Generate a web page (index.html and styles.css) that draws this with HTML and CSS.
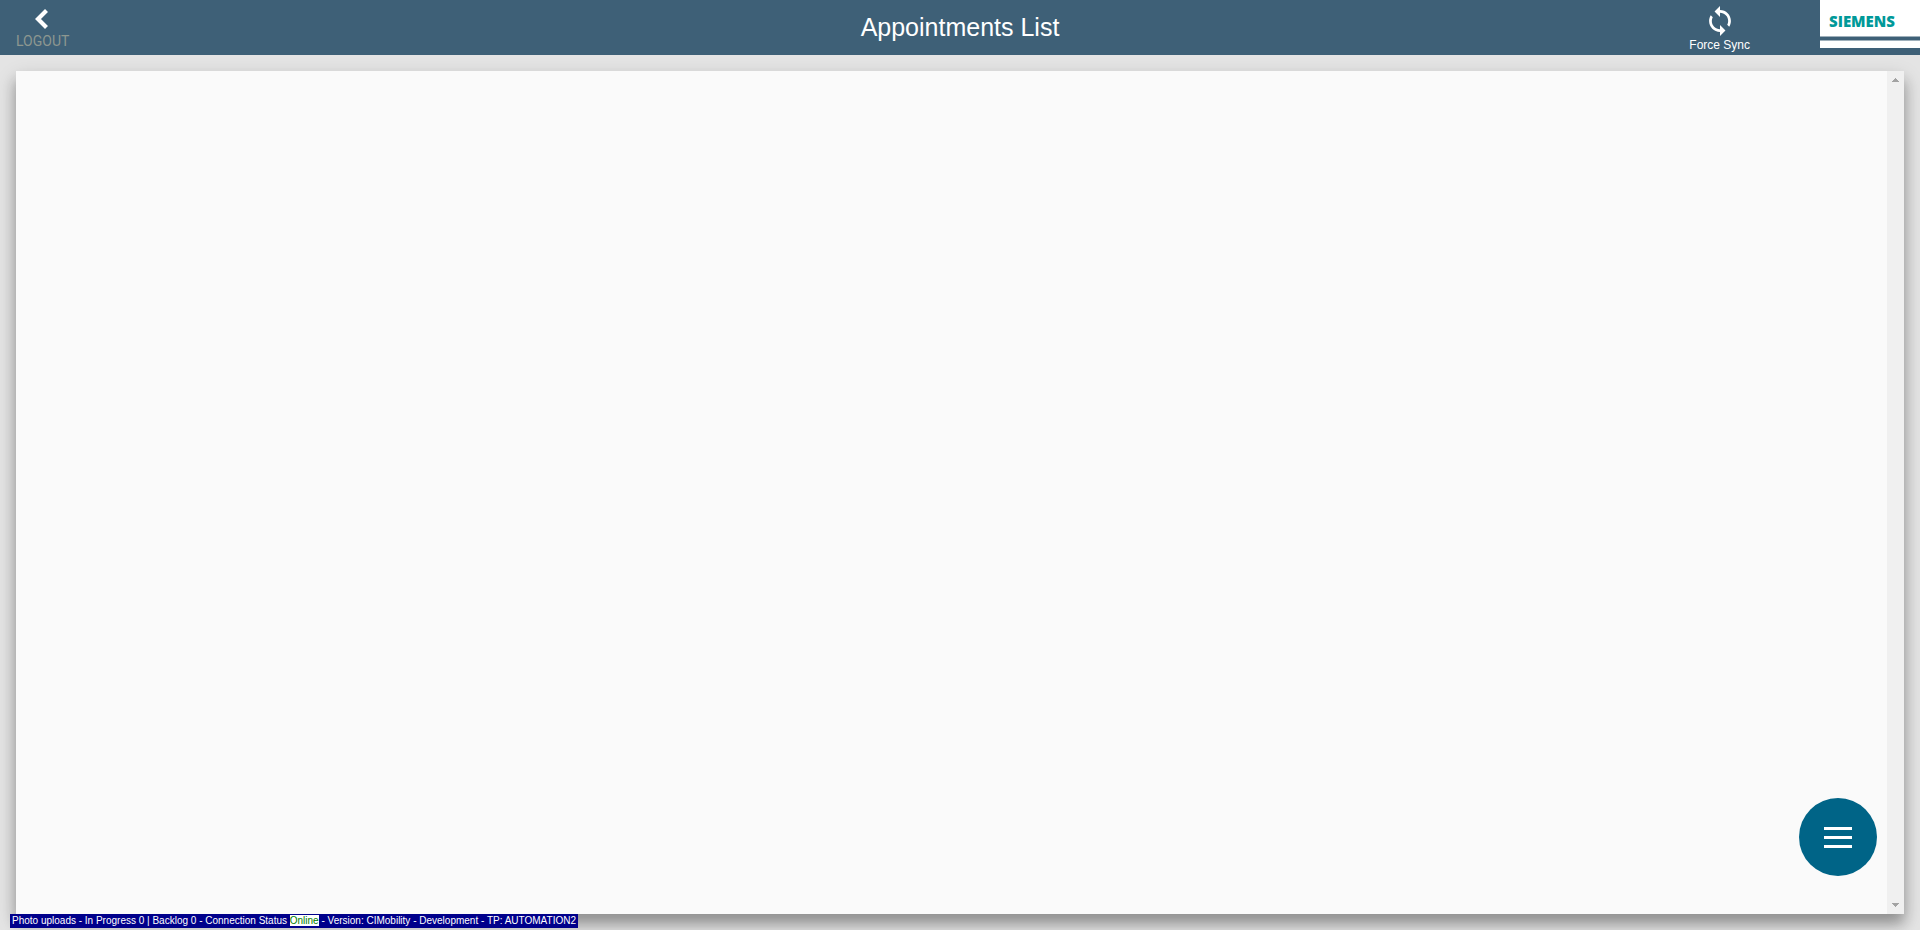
FILE: index.html
```html
<!DOCTYPE html>
<html lang="en">
<head>
<meta charset="utf-8">
<title>Appointments List</title>
<link rel="stylesheet" href="styles.css">
</head>
<body>
<header class="topbar">
  <button class="logout" type="button">
    <svg class="logout-icon" viewBox="0 0 14 20" aria-hidden="true"><path d="M11.500 1.500 3 10l8.500 8.500" fill="none" stroke="#fff" stroke-width="4.200"/></svg>
    <span>LOGOUT</span>
  </button>
  <h1 class="title">Appointments List</h1>
  <div class="actions">
    <button class="sync" type="button">
      <svg class="sync-icon" viewBox="1 1 22 22" aria-hidden="true"><path fill="#fff" d="M12 4V1L8 5l4 4V6c3.310 0 6 2.690 6 6 0 1.010-.25 1.970-.7 2.800l1.460 1.460C19.540 15.030 20 13.570 20 12c0-4.420-3.580-8-8-8zm0 14c-3.310 0-6-2.690-6-6 0-1.010.25-1.970.7-2.800L5.240 7.740C4.460 8.970 4 10.430 4 12c0 4.420 3.580 8 8 8v3l4-4-4-4v3z"/></svg>
      <span>Force Sync</span>
    </button>
    <div class="brand">
      <div class="brand-name">SIEMENS</div>
      <div class="brand-bar"></div>
    </div>
  </div>
</header>
<main class="panel">
  <div class="list"></div>
  <div class="scrollbar" aria-hidden="true">
    <svg class="arrow" viewBox="0 0 7 4"><path fill="#a3a3a3" d="M3 0h1v1h1v1h1v1h1v1H0V3h1V2h1V1h1z"/></svg>
    <svg class="arrow" viewBox="0 0 7 4"><path fill="#a3a3a3" d="M0 0h7v1H6v1H5v1H4v1H3V3H2V2H1V1H0z"/></svg>
  </div>
  <button class="fab" type="button" aria-label="Menu">
    <svg class="fab-icon" viewBox="0 0 28 21" aria-hidden="true"><path fill="#fff" d="M0 0h28v3H0zM0 9h28v3H0zM0 18h28v3H0z"/></svg>
  </button>
</main>
<footer class="status">Photo uploads - In Progress 0 | Backlog 0 - Connection Status <span class="online">Online</span> - Version: CIMobility - Development - TP: AUTOMATION2</footer>
</body>
</html>
```
FILE: styles.css
```css
* {
  box-sizing: border-box;
}

body {
  margin: 0;
  height: 100vh;
  display: flex;
  flex-direction: column;
  background: #e4e4e4;
  font-family: "Liberation Sans", Arial, sans-serif;
}

button {
  border: 0;
  padding: 0;
  background: none;
  color: #fff;
  font: inherit;
  cursor: pointer;
}

.topbar {
  display: grid;
  grid-template-columns: 1fr auto 1fr;
  height: 55px;
  background: #3e6077;
}

.logout {
  display: flex;
  flex-direction: column;
  align-items: flex-start;
  justify-self: start;
  gap: 4px;
  padding: 9px 0 0 16px;
  color: #8d9790;
  font-family: Roboto, sans-serif;
  font-size: 14px;
  line-height: 16px;
}

.logout-icon {
  width: 14px;
  height: 20px;
  margin-left: 19px;
}

.title {
  margin: 0;
  color: #fff;
  font-size: 25px;
  font-weight: 400;
  line-height: 55px;
}

.actions {
  display: flex;
  justify-content: flex-end;
  align-items: flex-start;
  gap: 70px;
}

.sync {
  display: flex;
  flex-direction: column;
  align-items: center;
  gap: 2px;
  padding-top: 6px;
  font-size: 12px;
  line-height: 14px;
}

.sync-icon {
  width: 30px;
  height: 30px;
}

.brand {
  width: 100px;
}

.brand-name {
  height: 37px;
  padding-left: 9px;
  border-bottom: 1px solid #9fb0bb;
  background: #fff;
  color: #099;
  font-family: "Open Sans", sans-serif;
  font-size: 15px;
  font-weight: 800;
  line-height: 42px;
}

.brand-bar {
  height: 8px;
  margin-top: 3px;
  border-top: 1px solid #9fb0bb;
  background: #fff;
}

.panel {
  position: relative;
  flex: 1;
  display: flex;
  margin: 16px 16px 0;
  background: #fafafa;
  box-shadow: 0 10px 12px rgba(0, 0, 0, 0.24), 0 8px 20px rgba(0, 0, 0, 0.2);
}

.list {
  flex: 1;
}

.scrollbar {
  display: flex;
  flex-direction: column;
  align-items: center;
  justify-content: space-between;
  width: 17px;
  padding: 7px 0;
  background: #f0f0f0;
}

.arrow {
  width: 7px;
  height: 4px;
}

.fab {
  position: absolute;
  right: 27px;
  bottom: 38px;
  display: flex;
  align-items: center;
  justify-content: center;
  width: 78px;
  height: 78px;
  border-radius: 50%;
  background: #006487;
}

.fab-icon {
  width: 28px;
  height: 21px;
}

.status {
  position: relative;
  align-self: flex-start;
  margin: 0 0 2px 10px;
  padding: 1px 2px;
  background: #00008b;
  color: #fff;
  font-size: 10px;
  line-height: 12px;
  white-space: nowrap;
}

.online {
  background: #fff;
  color: #008000;
}
```
